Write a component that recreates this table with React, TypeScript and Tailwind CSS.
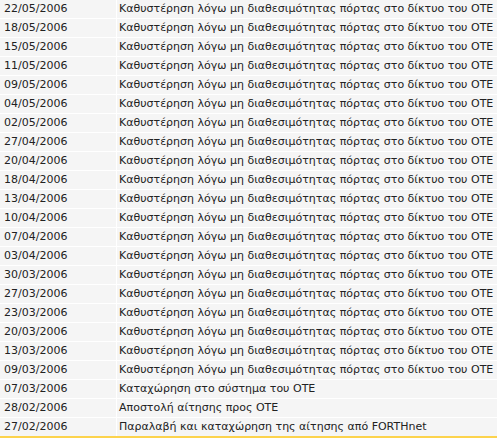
const DELAY = 'Καθυστέρηση λόγω μη διαθεσιμότητας πόρτας στο δίκτυο του ΟΤΕ';

const ROWS: [string, string][] = [
  ['22/05/2006', DELAY],
  ['18/05/2006', DELAY],
  ['15/05/2006', DELAY],
  ['11/05/2006', DELAY],
  ['09/05/2006', DELAY],
  ['04/05/2006', DELAY],
  ['02/05/2006', DELAY],
  ['27/04/2006', DELAY],
  ['20/04/2006', DELAY],
  ['18/04/2006', DELAY],
  ['13/04/2006', DELAY],
  ['10/04/2006', DELAY],
  ['07/04/2006', DELAY],
  ['03/04/2006', DELAY],
  ['30/03/2006', DELAY],
  ['27/03/2006', DELAY],
  ['23/03/2006', DELAY],
  ['20/03/2006', DELAY],
  ['13/03/2006', DELAY],
  ['09/03/2006', DELAY],
  ['07/03/2006', 'Καταχώρηση στο σύστημα του ΟΤΕ'],
  ['28/02/2006', 'Αποστολή αίτησης προς ΟΤΕ'],
  ['27/02/2006', 'Παραλαβή και καταχώρηση της αίτησης από FORTHnet'],
];

export default function App() {
  return (
    <div
      className="w-[497px] h-[439px] bg-white text-[11px] text-[#222]"
      style={{ fontFamily: 'Verdana, "DejaVu Sans", sans-serif' }}
    >
      <div className="flex flex-col gap-px">
        {ROWS.map(([date, text], i) => (
          <div key={i} className="flex gap-px h-[18px]">
            <div className="w-[116px] shrink-0 bg-[#f5f5f5] pl-[4px] leading-[18px]">{date}</div>
            <div className="flex-1 bg-[#f5f5f5] pl-[2px] leading-[18px] whitespace-nowrap">{text}</div>
          </div>
        ))}
      </div>
      <div className="h-[2px] bg-[#fcd34d]" />
    </div>
  );
}
